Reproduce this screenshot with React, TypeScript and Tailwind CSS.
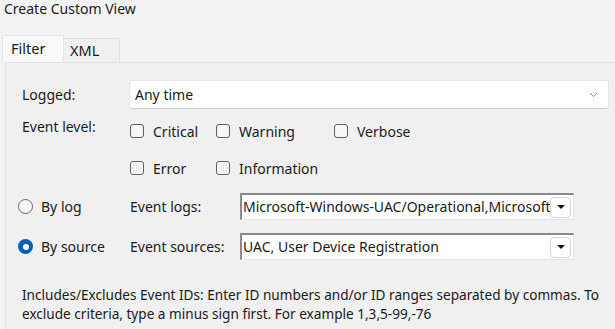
import React from "react";

const font = { fontFamily: '"Noto Sans", "Open Sans", sans-serif' };

function Checkbox({ label }: { label: string }) {
  return (
    <div className="flex items-center">
      <div className="w-[14px] h-[14px] rounded-[3px] border border-[#5f5f5f] bg-[#f6f6f6]" />
      <span className="ml-[9px]">{label}</span>
    </div>
  );
}

function Radio({ label, checked }: { label: string; checked?: boolean }) {
  return (
    <div className="flex items-center">
      {checked ? (
        <div className="w-[15px] h-[15px] rounded-full bg-[#005fb8] flex items-center justify-center">
          <div className="w-[6px] h-[6px] rounded-full bg-white" />
        </div>
      ) : (
        <div className="w-[15px] h-[15px] rounded-full border border-[#6b6b6b] bg-[#f6f6f6]" />
      )}
      <span className="ml-[8px]">{label}</span>
    </div>
  );
}

function Combo({ value }: { value: string }) {
  return (
    <div className="w-[334px] h-[27px] bg-white border-t-2 border-l-2 border-t-[#8a8a8a] border-l-[#8a8a8a] border-b border-r border-b-[#e3e3e3] border-r-[#e3e3e3] flex items-center pr-[2px]">
      <span className="flex-1 overflow-hidden whitespace-nowrap pl-[1px] text-[14px] leading-[20px]">{value}</span>
      <div className="w-[21px] h-[21px] rounded-[4px] border border-[#d4d4d4] bg-white flex items-center justify-center shrink-0">
        <svg width="10" height="6" viewBox="0 0 10 6"><path d="M1 1h8L5 5z" fill="#111" /></svg>
      </div>
    </div>
  );
}

export default function App() {
  return (
    <div className="w-[615px] h-[329px] bg-[#f3f3f3] overflow-hidden text-[#1a1a1a] text-[14px]" style={font}>
      <div className="pl-[4px] h-[36px] text-[14px] leading-[17px]">Create Custom View</div>
      <div className="flex items-end h-[26px] pl-[2px]">
        <div className="w-[62px] h-[27px] bg-[#f9f9f9] border border-b-0 border-[#e6e6e6] pl-[8px] pt-[2px] text-[14.5px] relative z-10">Filter</div>
        <div className="w-[56px] h-[24px] bg-[#f0f0f0] border border-b-0 border-l-0 border-[#e3e3e3] pl-[6px] pt-[1px] text-[14.5px]">XML</div>
      </div>
      <div className="ml-[5px] h-[300px] bg-[#f0f0f0] border-t border-l border-[#e2e2e2] pl-[16px]">
        <div className="flex items-center mt-[17px] h-[29px]">
          <span className="w-[107px]">Logged:</span>
          <div className="w-[480px] h-[29px] bg-white border border-[#e5e5e5] border-b-[#cfcfcf] rounded-[3px] flex items-center pl-[5px] pr-[10px]">
            <span className="flex-1">Any time</span>
            <svg width="9" height="6" viewBox="0 0 9 6"><path d="M1 1l3.5 3.5L8 1" fill="none" stroke="#8a8a8a" strokeWidth="1" /></svg>
          </div>
        </div>
        <div className="flex items-center mt-[10px] h-[24px]">
          <span className="w-[108px] -mt-[10px]">Event level:</span>
          <div className="w-[86px]"><Checkbox label="Critical" /></div>
          <div className="w-[118px]"><Checkbox label="Warning" /></div>
          <Checkbox label="Verbose" />
        </div>
        <div className="flex items-center mt-[13px] h-[24px] pl-[108px]">
          <div className="w-[86px]"><Checkbox label="Error" /></div>
          <Checkbox label="Information" />
        </div>
        <div className="flex items-center mt-[13px] h-[27px] -ml-[4px]">
          <div className="w-[112px]"><Radio label="By log" /></div>
          <span className="w-[110px]">Event logs:</span>
          <Combo value="Microsoft-Windows-UAC/Operational,Microsoft-Windows-User Device Registration/Admin" />
        </div>
        <div className="flex items-center mt-[13px] h-[27px] -ml-[4px]">
          <div className="w-[112px]"><Radio label="By source" checked /></div>
          <span className="w-[110px]">Event sources:</span>
          <Combo value="UAC, User Device Registration" />
        </div>
        <div className="mt-[25px] leading-[19px] text-[13.6px] w-[594px]">
          Includes/Excludes Event IDs: Enter ID numbers and/or ID ranges separated by commas. To exclude criteria, type a minus sign first. For example 1,3,5-99,-76
        </div>
      </div>
    </div>
  );
}
